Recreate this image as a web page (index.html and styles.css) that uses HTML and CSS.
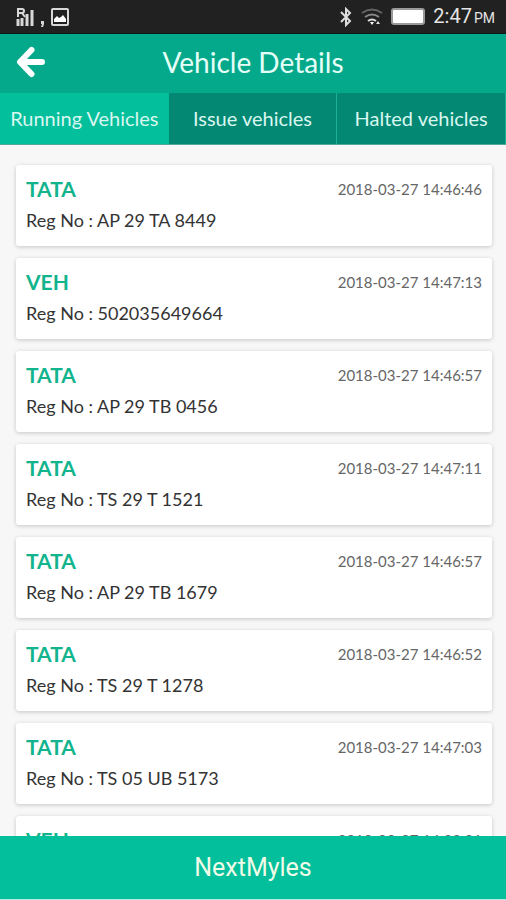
FILE: index.html
```html
<!DOCTYPE html>
<html lang="en">
<head>
<meta charset="utf-8">
<meta name="viewport" content="width=device-width, initial-scale=1">
<title>Vehicle Details</title>
<link rel="stylesheet" href="styles.css">
</head>
<body>
<div class="statusbar">
  <div class="status-group">
    <svg width="18" height="20" viewBox="0 0 18 20" fill="none" stroke="#d8d8d8" stroke-width="2" aria-hidden="true"><path d="M2 10V2h4q2 0 2 2t-2 2H3M6 6l3 4"/><path d="M2 19v-7M6 19v-8M11 19V7M16 19V3" stroke-width="3"/></svg>
    <svg width="5" height="20" viewBox="0 0 5 20" aria-hidden="true"><path d="M1 14h3v3l-1 3H1l1-3H1z" fill="#d8d8d8"/></svg>
    <svg width="18" height="18" viewBox="0 0 18 18" aria-hidden="true"><rect x="1" y="1" width="16" height="16" rx="1" fill="none" stroke="#d8d8d8" stroke-width="2"/><path d="M3 14V11l3-3 2 2 2-1 2-2 3 4v3z" fill="#fff"/></svg>
  </div>
  <div class="status-group">
    <svg width="14" height="20" viewBox="0 0 14 20" fill="none" stroke="#ddd" stroke-width="2" aria-hidden="true"><path d="M2 5l9 9-4 4V2l4 4-9 9"/></svg>
    <svg width="22" height="18" viewBox="0 0 22 18" fill="none" stroke-width="2" aria-hidden="true"><path d="M1 5Q11-2 21 5" stroke="#666"/><path d="M4 9q7-5 14 0" stroke="#888"/><path d="M7 13q4-3 8 0" stroke="#ddd"/><path d="M9 14h4l-2 3z" fill="#fff"/><path d="M15 16l2-3 2 3z" fill="#ddd"/></svg>
    <svg width="34" height="17" viewBox="0 0 34 17" aria-hidden="true"><rect x="1" y="1" width="32" height="15" rx="2" fill="#fff" stroke="#999" stroke-width="2"/></svg>
    <span class="clock">2:47<small>PM</small></span>
  </div>
</div>
<header class="header">
  <button class="back" type="button" aria-label="Back"><svg width="30" height="32" viewBox="0 0 30 32" fill="none" stroke="#fff" stroke-width="6" stroke-linecap="round" stroke-linejoin="round" aria-hidden="true"><path d="M15.500 4L4 16l11.500 12M5 16h21"/></svg></button>
  <h1>Vehicle Details</h1>
</header>
<nav class="tabs">
  <button class="tab active" type="button">Running Vehicles</button>
  <button class="tab" type="button">Issue vehicles</button>
  <button class="tab" type="button">Halted vehicles</button>
</nav>
<main class="list">
  <article class="card"><div class="top"><h2>TATA</h2><time>2018-03-27 14:46:46</time></div><p>Reg No : AP 29 TA 8449</p></article>
  <article class="card"><div class="top"><h2>VEH</h2><time>2018-03-27 14:47:13</time></div><p>Reg No : 502035649664</p></article>
  <article class="card"><div class="top"><h2>TATA</h2><time>2018-03-27 14:46:57</time></div><p>Reg No : AP 29 TB 0456</p></article>
  <article class="card"><div class="top"><h2>TATA</h2><time>2018-03-27 14:47:11</time></div><p>Reg No : TS 29 T 1521</p></article>
  <article class="card"><div class="top"><h2>TATA</h2><time>2018-03-27 14:46:57</time></div><p>Reg No : AP 29 TB 1679</p></article>
  <article class="card"><div class="top"><h2>TATA</h2><time>2018-03-27 14:46:52</time></div><p>Reg No : TS 29 T 1278</p></article>
  <article class="card"><div class="top"><h2>TATA</h2><time>2018-03-27 14:47:03</time></div><p>Reg No : TS 05 UB 5173</p></article>
  <article class="card"><div class="top"><h2>VEH</h2><time>2018-03-27 14:38:31</time></div></article>
</main>
<footer class="footer">NextMyles</footer>
</body>
</html>
```
FILE: styles.css
```css
* { box-sizing: border-box; }
body {
  margin: 0;
  height: 100vh;
  display: flex;
  flex-direction: column;
  overflow: hidden;
  background: #f7f7f7;
  font-family: Lato, sans-serif;
}
h1, h2, p { margin: 0; font-weight: 400; }
button { border: 0; padding: 0; font: inherit; color: inherit; cursor: pointer; }
svg { display: block; flex: none; }
.statusbar {
  flex: none;
  height: 34px;
  padding: 0 11px 0 16px;
  display: flex;
  align-items: center;
  justify-content: space-between;
  background: #212121;
  border-bottom: 1px solid #0c1a17;
  color: #e4e4e4;
  font-family: Roboto, sans-serif;
}
.status-group { display: flex; align-items: center; gap: 6px; }
.status-group + .status-group { gap: 8px; }
.clock {
  display: flex;
  align-items: baseline;
  gap: 2px;
  font-size: 20px;
  line-height: 36px;
}
.clock small { font-size: 14px; }
.header {
  flex: none;
  height: 59px;
  padding: 0 16px 4px;
  display: grid;
  grid-template-columns: 30px 1fr 30px;
  align-items: center;
  background: #04a98c;
  color: #e4fff8;
}
.back { background: none; }
.header h1 { text-align: center; font-size: 28px; line-height: 54px; }
.tabs {
  flex: none;
  height: 52px;
  display: grid;
  grid-template-columns: repeat(3, 1fr);
  border-bottom: 1px solid #53a99a;
}
.tab {
  padding-bottom: 2px;
  background: #038873;
  color: #d9f7f0;
  font-size: 20px;
  white-space: nowrap;
  border-right: 1px solid #1cb295;
}
.tab.active { background: #03bf9b; border-right: 0; }
.list {
  flex: 1;
  min-height: 0;
  overflow: hidden;
  padding: 20px 14px 0 16px;
  display: flex;
  flex-direction: column;
  gap: 12px;
}
.card {
  flex: none;
  height: 81px;
  padding: 9px 10px;
  background: #fff;
  border-radius: 3px;
  box-shadow: 0 1px 4px rgba(0, 0, 0, .2);
}
.top { display: flex; justify-content: space-between; }
.card h2 { color: #12b48d; font-size: 21px; line-height: 30px; font-weight: 700; }
.card time { color: #666; font-size: 15px; line-height: 30px; }
.card p { color: #333; font-size: 18px; line-height: 32px; }
.footer {
  flex: none;
  height: 64px;
  text-align: center;
  background: #03bf9b;
  color: #f0fbe8;
  border-bottom: 1px solid #b5eadf;
  font: 25px/64px Roboto, sans-serif;
}
```
